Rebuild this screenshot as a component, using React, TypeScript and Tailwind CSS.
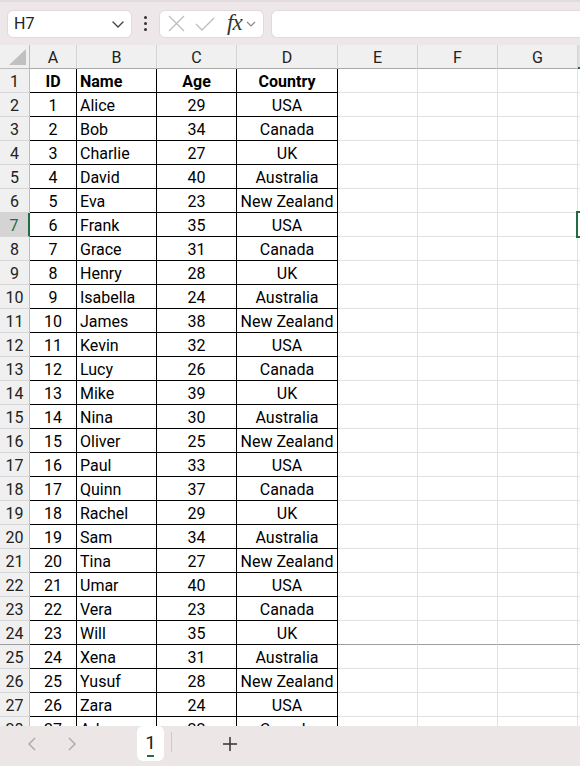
import React from "react";

const rows: [string, string, string, string][] = [
  ["1", "Alice", "29", "USA"],
  ["2", "Bob", "34", "Canada"],
  ["3", "Charlie", "27", "UK"],
  ["4", "David", "40", "Australia"],
  ["5", "Eva", "23", "New Zealand"],
  ["6", "Frank", "35", "USA"],
  ["7", "Grace", "31", "Canada"],
  ["8", "Henry", "28", "UK"],
  ["9", "Isabella", "24", "Australia"],
  ["10", "James", "38", "New Zealand"],
  ["11", "Kevin", "32", "USA"],
  ["12", "Lucy", "26", "Canada"],
  ["13", "Mike", "39", "UK"],
  ["14", "Nina", "30", "Australia"],
  ["15", "Oliver", "25", "New Zealand"],
  ["16", "Paul", "33", "USA"],
  ["17", "Quinn", "37", "Canada"],
  ["18", "Rachel", "29", "UK"],
  ["19", "Sam", "34", "Australia"],
  ["20", "Tina", "27", "New Zealand"],
  ["21", "Umar", "40", "USA"],
  ["22", "Vera", "23", "Canada"],
  ["23", "Will", "35", "UK"],
  ["24", "Xena", "31", "Australia"],
  ["25", "Yusuf", "28", "New Zealand"],
  ["26", "Zara", "24", "USA"],
  ["27", "Adam", "22", "Canada"],
];

const allRows: [string, string, string, string][] = [["ID", "Name", "Age", "Country"], ...rows];

function TopBar() {
  return (
    <div className="h-[45px] shrink-0 bg-[#ede7e9] border-t-2 border-[#e2dcde] flex items-center pl-[7px] relative">
      <div className="w-[125px] h-[28px] bg-white rounded-[6px] border border-[#e0dadc] flex items-center justify-between pl-[6px] pr-[6px]">
        <span className="text-[16px] text-[#222]">H7</span>
        <svg width="14" height="14" viewBox="0 0 14 14" fill="none">
          <path d="M2 5 L7 10 L12 5" stroke="#444" strokeWidth="1.4" strokeLinecap="round" strokeLinejoin="round" />
        </svg>
      </div>
      <div className="w-[27px] flex flex-col items-center gap-[3px]">
        <span className="w-[3px] h-[3px] bg-[#333] rounded-full" />
        <span className="w-[3px] h-[3px] bg-[#333] rounded-full" />
        <span className="w-[3px] h-[3px] bg-[#333] rounded-full" />
      </div>
      <div className="w-[105px] h-[28px] bg-white rounded-[6px] border border-[#e0dadc] flex items-center pl-[6px]">
        <svg width="19" height="19" viewBox="0 0 19 19" fill="none" className="ml-[1px]">
          <path d="M2 2 L17 17 M17 2 L2 17" stroke="#bdbdbd" strokeWidth="1.3" />
        </svg>
        <svg width="22" height="18" viewBox="0 0 22 18" fill="none" className="ml-[8px]">
          <path d="M2 9 L8 15 L20 3" stroke="#bdbdbd" strokeWidth="1.3" />
        </svg>
        <span className="ml-[11px] text-[23px] italic text-[#333] leading-none font-['Liberation_Serif',serif] tracking-[-1px] mt-[-3px]">fx</span>
        <svg width="12" height="12" viewBox="0 0 12 12" fill="none" className="ml-[3px]">
          <path d="M2 4 L6 8 L10 4" stroke="#888" strokeWidth="1.2" />
        </svg>
      </div>
      <div className="ml-[7px] flex-1 h-[28px] bg-white rounded-l-[6px] border border-r-0 border-[#e0dadc]" />
    </div>
  );
}

const widthCls = ["w-[30px]", "w-[47px]", "w-[80px]", "w-[80px]", "w-[101px]", "w-[80px]", "w-[80px]", "w-[80px]", "w-[20px]"];
const letters = ["", "A", "B", "C", "D", "E", "F", "G", "H"];

function HeaderRow() {
  return (
    <div className="flex h-[24px] shrink-0 bg-[#f0f0f0]">
      {letters.map((l, i) => {
        if (i === 0) {
          return (
            <div key={i} className={`${widthCls[i]} shrink-0 h-full border-r border-b border-[#bdbdbd] relative`}>
              <svg width="17" height="16" viewBox="0 0 17 16" className="absolute right-[3px] bottom-[3px]">
                <polygon points="17,0 17,16 0,16" fill="#c0c0c0" />
              </svg>
            </div>
          );
        }
        const sel = i === 8;
        return (
          <div
            key={i}
            className={`${widthCls[i]} shrink-0 h-full flex items-center justify-center pt-[2px] text-[16px] text-[#222] border-r ${sel ? "border-r-0 border-b-2 border-b-[#1e6e42] bg-[#e0e0e0]" : "border-b border-b-[#a8a8a8] border-r-[#d4d4d4]"} ${i === 7 ? "border-r-[#a8a8a8]" : ""}`}
          >
            {l}
          </div>
        );
      })}
    </div>
  );
}

function DataRow({ r, idx }: { r: [string, string, string, string]; idx: number }) {
  const rowNum = idx + 1;
  const header = idx === 0;
  const frozen = rowNum === 24;
  const selRow = rowNum === 7;
  const base = "shrink-0 h-full flex items-center pt-[2px] text-[16px] text-black border-r border-b border-black";
  return (
    <div className="flex h-[24px] shrink-0">
      <div
        className={`w-[30px] shrink-0 h-full flex items-center justify-center pt-[2px] text-[16px] border-b ${frozen ? "border-b-[#9e9e9e]" : "border-b-[#d6d6d6]"} ${selRow ? "bg-[#d4d4d4] text-[#1e6e42] border-r-2 border-r-[#1e6e42]" : "bg-[#f0f0f0] text-[#222] border-r border-r-[#bdbdbd]"}`}
      >
        {rowNum}
      </div>
      <div className={`w-[47px] justify-center ${base} ${header ? "font-bold" : ""}`}>{r[0]}</div>
      <div className={`w-[80px] pl-[3px] ${base} ${header ? "font-bold" : ""}`}>{r[1]}</div>
      <div className={`w-[80px] justify-center ${base} ${header ? "font-bold" : ""}`}>{r[2]}</div>
      <div className={`w-[101px] justify-center whitespace-nowrap ${base} ${header ? "font-bold" : ""}`}>{r[3]}</div>
      {[0, 1, 2, 3].map((k) => (
        <div
          key={k}
          className={`${k === 3 ? "w-[20px]" : "w-[80px]"} shrink-0 h-full border-r border-r-[#e1e1e1] border-b ${frozen ? "border-b-[#9e9e9e]" : "border-b-[#e1e1e1]"}`}
        />
      ))}
    </div>
  );
}

function Grid() {
  return (
    <div className="flex-1 overflow-hidden relative bg-white">
      <HeaderRow />
      {allRows.map((r, i) => (
        <DataRow key={i} r={r} idx={i} />
      ))}
      <div className="absolute left-[576px] top-[166px] w-[10px] h-[27px] border-2 border-[#1e6e42]" />
    </div>
  );
}

function BottomBar() {
  return (
    <div className="h-[40px] shrink-0 bg-[#ede6e7] flex items-start relative">
      <div className="flex items-center h-[36px] pl-[26px] gap-[28px]">
        <svg width="12" height="16" viewBox="0 0 12 16" fill="none">
          <path d="M9 2 L3 8 L9 14" stroke="#a9a9a9" strokeWidth="1.4" />
        </svg>
        <svg width="12" height="16" viewBox="0 0 12 16" fill="none">
          <path d="M3 2 L9 8 L3 14" stroke="#a9a9a9" strokeWidth="1.4" />
        </svg>
      </div>
      <div className="ml-[59px] w-[27px] h-[35px] bg-white rounded-[6px] flex flex-col items-center justify-center relative">
        <span className="text-[19px] text-[#222] leading-none mt-[-2px]">1</span>
        <span className="absolute bottom-[4px] left-[10px] w-[7px] h-[2px] bg-[#1e6e42]" />
      </div>
      <div className="ml-[7px] mt-[6px] w-px h-[20px] bg-[#cfc9ca]" />
      <div className="ml-[49px] h-[36px] flex items-center">
        <svg width="18" height="18" viewBox="0 0 18 18" fill="none">
          <path d="M9 2 V16 M2 9 H16" stroke="#333" strokeWidth="1.5" />
        </svg>
      </div>
    </div>
  );
}

export default function App() {
  return (
    <div className="w-[580px] h-[766px] flex flex-col overflow-hidden bg-white font-['Roboto',sans-serif]">
      <TopBar />
      <Grid />
      <BottomBar />
    </div>
  );
}
